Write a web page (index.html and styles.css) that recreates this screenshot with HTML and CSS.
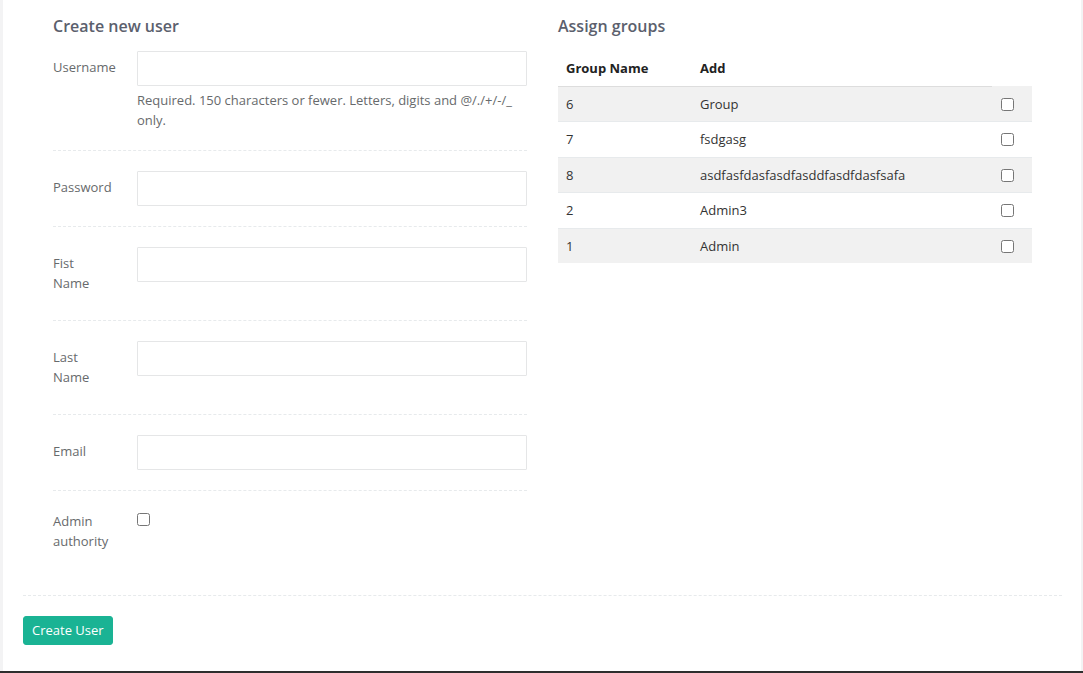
FILE: index.html
```html
<!DOCTYPE html>
<html lang="en">
<head>
<meta charset="utf-8">
<title>Create new user</title>
<link rel="stylesheet" href="styles.css">
</head>
<body>
<div class="page">
  <main class="panel">
    <div class="columns">
      <section class="col">
        <h3 class="title">Create new user</h3>
        <form class="form">
          <div class="form-group">
            <label class="control-label">Username</label>
            <div class="field">
              <input class="form-control" type="text">
              <span class="help-block">Required. 150 characters or fewer. Letters, digits and @/./+/-/_ only.</span>
            </div>
          </div>
          <div class="hr-dashed"></div>
          <div class="form-group">
            <label class="control-label">Password</label>
            <div class="field"><input class="form-control" type="password"></div>
          </div>
          <div class="hr-dashed"></div>
          <div class="form-group">
            <label class="control-label">Fist<br>Name</label>
            <div class="field"><input class="form-control" type="text"></div>
          </div>
          <div class="hr-dashed"></div>
          <div class="form-group">
            <label class="control-label">Last<br>Name</label>
            <div class="field"><input class="form-control" type="text"></div>
          </div>
          <div class="hr-dashed"></div>
          <div class="form-group">
            <label class="control-label">Email</label>
            <div class="field"><input class="form-control" type="email"></div>
          </div>
          <div class="hr-dashed"></div>
          <div class="form-group">
            <label class="control-label check-label">Admin<br>authority</label>
            <div class="field"><input class="check" type="checkbox"></div>
          </div>
        </form>
      </section>
      <section class="col">
        <h3 class="title">Assign groups</h3>
        <table class="groups">
          <thead>
            <tr><th class="c-id">Group Name</th><th class="c-name">Add</th></tr>
          </thead>
          <tbody>
            <tr class="odd"><td>6</td><td>Group</td><td class="c-check"><input class="row-check" type="checkbox"></td></tr>
            <tr><td>7</td><td>fsdgasg</td><td class="c-check"><input class="row-check" type="checkbox"></td></tr>
            <tr class="odd"><td>8</td><td>asdfasfdasfasdfasddfasdfdasfsafa</td><td class="c-check"><input class="row-check" type="checkbox"></td></tr>
            <tr><td>2</td><td>Admin3</td><td class="c-check"><input class="row-check" type="checkbox"></td></tr>
            <tr class="odd"><td>1</td><td>Admin</td><td class="c-check"><input class="row-check" type="checkbox"></td></tr>
          </tbody>
        </table>
      </section>
    </div>
    <div class="hr-dashed footer-hr"></div>
    <button class="btn-primary" type="button">Create User</button>
  </main>
  <div class="bottom-bar"></div>
</div>
</body>
</html>
```

FILE: styles.css
```css
html, body {
  margin: 0;
  padding: 0;
  height: 100%;
}

body {
  background: #f3f3f4;
  font-family: "Open Sans", "Liberation Sans", sans-serif;
  font-size: 13px;
  color: #676a6c;
}

.page {
  height: 100vh;
  display: flex;
  flex-direction: column;
}

.panel {
  flex: 1;
  background: #ffffff;
  margin: 0 2px 0 3px;
  padding: 0 19px 0 20px;
}

.columns {
  display: grid;
  grid-template-columns: 474px 474px;
  column-gap: 31px;
  padding-left: 30px;
}

.title {
  margin: 17px 0 16px;
  font-size: 16px;
  line-height: 18px;
  font-weight: 600;
  color: #5b606d;
}

.form-group {
  display: flex;
  align-items: flex-start;
}

.control-label {
  width: 84px;
  flex: none;
  padding-top: 6px;
  margin-bottom: 7px;
  line-height: 20px;
  color: #676a6c;
}

.check-label {
  padding-top: 0;
}

.field {
  flex: 1;
}

.form-control {
  display: block;
  box-sizing: border-box;
  width: 390px;
  height: 35px;
  margin: 0;
  padding: 6px 12px;
  border: 1px solid #e5e6e7;
  border-radius: 1px;
  background: #ffffff;
  font: inherit;
  outline: none;
}

.help-block {
  display: block;
  margin-top: 5px;
  line-height: 19.5px;
  color: #676a6c;
}

.check {
  display: block;
  margin: 2px 0 0 0;
  width: 13px;
  height: 13px;
}

.hr-dashed {
  height: 0;
  border-top: 1px dashed #e7eaec;
  margin: 20px 0;
}

.footer-hr {
  margin: 37px 0 20px;
}

.groups {
  width: 474px;
  table-layout: fixed;
  border-collapse: collapse;
  border-spacing: 0;
  color: #333333;
}

.groups th {
  text-align: left;
  font-weight: 700;
  color: #222222;
  padding: 8px;
  line-height: 18.5px;
  border-bottom: 1px solid #dddddd;
}

.groups td {
  padding: 8px;
  line-height: 18.5px;
  border-top: 1px solid #e7eaec;
}

.groups tbody tr:first-child td {
  border-top: none;
}

.c-id {
  width: 118px;
}

.c-name {
  width: 284px;
}

.groups td.c-check {
  padding-left: 9px;
}

.groups tr.odd td {
  background: #f1f1f1;
}

.row-check {
  display: block;
  margin: 1px 0 0 0;
  width: 13px;
  height: 13px;
}

.btn-primary {
  display: block;
  height: 29px;
  padding: 0 8px;
  border: 1px solid #1ab394;
  border-radius: 3px;
  background: #1ab394;
  color: #ffffff;
  font-family: "Open Sans", "Liberation Sans", sans-serif;
  font-size: 13px;
  line-height: 27px;
  cursor: pointer;
}

.bottom-bar {
  height: 2px;
  background: #2e2e2e;
}
```
